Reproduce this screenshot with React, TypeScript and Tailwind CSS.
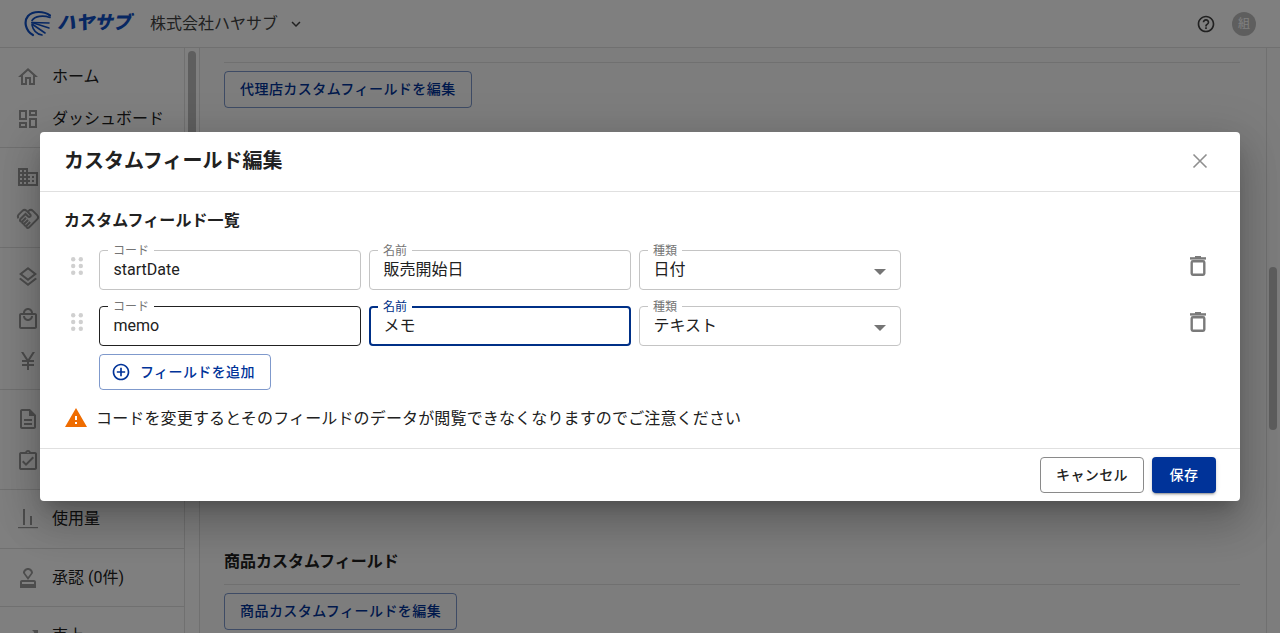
import {
  MdOutlineHome,
  MdOutlineDashboard,
  MdOutlineDomain,
  MdOutlineHandshake,
  MdOutlineLayers,
  MdOutlineLocalMall,
  MdCurrencyYen,
  MdOutlineDescription,
  MdOutlineAssignmentTurnedIn,
  MdOutlineApproval,
  MdOutlineHelpOutline,
  MdKeyboardArrowDown,
  MdOutlineAddCircleOutline,
  MdOutlineTrendingUp,
  MdWarning,
} from 'react-icons/md'

const UsageIcon = () => (
  <svg width="24" height="24" viewBox="0 0 24 24" fill="#9a9a9a">
    <rect x="2" y="20" width="20" height="1.2" />
    <rect x="7" y="2" width="2" height="16" />
    <rect x="14" y="9" width="2" height="9" />
  </svg>
)

const Logo = () => (
  <div className="flex items-center gap-[6px] ml-6">
    <svg width="27" height="28" viewBox="0 0 27 28" fill="none" stroke="#0f4fc4" strokeLinecap="round">
      <path d="M26 5.5C20 1 9 0.5 4 6C-0.5 11.5 1.5 21 9 25" strokeWidth="2.2" />
      <path d="M26 7.5C19 5 11 6 8 10.5" strokeWidth="1.6" />
      <path d="M8 12.5L25 18" strokeWidth="1.6" />
      <path d="M8 14L21 23" strokeWidth="1.6" />
      <path d="M8 12.5L25 13" strokeWidth="1.6" />
      <path d="M8 15C9 20 13 24 18 25" strokeWidth="1.6" />
    </svg>
    <span className="text-[18.5px] leading-none font-black italic text-[#0f4fc4]">ハヤサブ</span>
  </div>
)

const sections = [
  [
    { icon: <MdOutlineHome size={24} />, label: 'ホーム' },
    { icon: <MdOutlineDashboard size={24} />, label: 'ダッシュボード' },
  ],
  [
    { icon: <MdOutlineDomain size={24} /> },
    { icon: <MdOutlineHandshake size={24} /> },
  ],
  [
    { icon: <MdOutlineLayers size={24} /> },
    { icon: <MdOutlineLocalMall size={24} /> },
    { icon: <MdCurrencyYen size={24} /> },
  ],
  [
    { icon: <MdOutlineDescription size={24} /> },
    { icon: <MdOutlineAssignmentTurnedIn size={24} /> },
  ],
  [{ icon: <UsageIcon />, label: '使用量' }],
  [{ icon: <MdOutlineApproval size={24} />, label: '承認 (0件)' }],
]

const Sidebar = () => (
  <div className="flex w-[200px] shrink-0 border-r border-[#e0e0e0] bg-white">
    <nav className="w-[185px] shrink-0 border-r border-[#e0e0e0] overflow-hidden">
      {sections.map((items, i) => (
        <div key={i} className="border-b border-[#e0e0e0] pt-2 pb-[7px] [&:nth-child(5)]:pb-2">
          {items.map((item, j) => (
            <div key={j} className="flex items-center h-[42px] pl-4 gap-3 text-[16px] text-[#212121]">
              <span className="text-[#9a9a9a]">{item.icon}</span>
              <span>{item.label}</span>
            </div>
          ))}
        </div>
      ))}
      <div className="flex items-center h-[42px] mt-2 pl-4 gap-3 text-[16px] text-[#212121]">
        <MdOutlineTrendingUp size={24} className="text-[#9a9a9a]" />
        <span>売上</span>
      </div>
    </nav>
    <div className="flex-1 pl-[3px] pt-[3px]">
      <div className="w-2 h-[300px] rounded bg-[#bdbdbd]" />
    </div>
  </div>
)

const OutlineButton = ({ children }: { children: string }) => (
  <button className="h-[37px] px-[15px] rounded border border-[#00339980] text-[14px] tracking-[0.45px] font-medium text-[#003399]">
    {children}
  </button>
)

const Main = () => (
  <main className="flex-1 flex min-w-0 bg-[#fafafa]">
    <div className="flex-1 pl-6 pr-[26px] pt-[14px]">
      <div className="border-t border-[#e0e0e0]" />
      <div className="mt-2">
        <OutlineButton>代理店カスタムフィールドを編集</OutlineButton>
      </div>
      <h3 className="mt-[442px] h-6 leading-6 text-[16px] font-bold text-[#212121]">商品カスタムフィールド</h3>
      <div className="mt-[10px] border-t border-[#e0e0e0]" />
      <div className="mt-2">
        <OutlineButton>商品カスタムフィールドを編集</OutlineButton>
      </div>
    </div>
    <div className="w-[14px] shrink-0 border-l border-[#e0e0e0] pl-[2px] pt-[219px]">
      <div className="w-2 h-[163px] rounded bg-[#bdbdbd]" />
    </div>
  </main>
)

const DragHandle = () => (
  <div className="w-[35px] shrink-0 h-10 flex items-start pl-[7px] pt-[7px]">
    <svg width="12" height="18" viewBox="0 0 12 18" fill="#d0d0d0">
      <circle cx="2.2" cy="2.2" r="2.2" />
      <circle cx="9.8" cy="2.2" r="2.2" />
      <circle cx="2.2" cy="9" r="2.2" />
      <circle cx="9.8" cy="9" r="2.2" />
      <circle cx="2.2" cy="15.8" r="2.2" />
      <circle cx="9.8" cy="15.8" r="2.2" />
    </svg>
  </div>
)

const TrashIcon = () => (
  <svg width="24" height="24" viewBox="0 0 24 24" fill="#7a7a7a">
    <rect x="9" y="2" width="6" height="2" />
    <rect x="4" y="3.2" width="16" height="2.4" />
    <rect x="5.7" y="7.2" width="12.6" height="13.6" rx="1.2" fill="none" stroke="#7a7a7a" strokeWidth="2.4" />
  </svg>
)

const Field = ({
  label,
  value,
  state,
  select,
}: {
  label: string
  value: string
  state?: 'hover' | 'focus'
  select?: boolean
}) => (
  <div
    className={
      state === 'focus'
        ? 'relative w-[262px] h-10 rounded border-2 border-[#003087] pl-[12.5px] flex items-center text-[16px] text-[#212121]'
        : state === 'hover'
          ? 'relative w-[262px] h-10 rounded border border-[#212121] pl-[13.5px] flex items-center text-[16px] text-[#212121]'
          : 'relative w-[262px] h-10 rounded border border-[#c4c4c4] pl-[13.5px] flex items-center text-[16px] text-[#212121]'
    }
  >
    <span
      className={
        state === 'focus'
          ? 'absolute left-[7px] -top-[9px] px-[5px] bg-white text-[12px] leading-4 text-[#003087]'
          : 'absolute left-[8px] -top-[8px] px-[5px] bg-white text-[12px] leading-4 text-[#757575]'
      }
    >
      {label}
    </span>
    <span>{value}</span>
    {select && (
      <svg className="absolute right-[14px] top-[18px]" width="12" height="6" viewBox="0 0 12 6" fill="#757575">
        <path d="M0 0h12L6 6z" />
      </svg>
    )}
  </div>
)

const FieldRow = ({ code, name, type, active }: { code: string; name: string; type: string; active?: boolean }) => (
  <div className="flex items-start">
    <DragHandle />
    <div className="flex gap-2">
      <Field label="コード" value={code} state={active ? 'hover' : undefined} />
      <Field label="名前" value={name} state={active ? 'focus' : undefined} />
      <Field label="種類" value={type} select />
    </div>
    <button className="ml-auto w-9 h-8 flex items-center justify-center">
      <TrashIcon />
    </button>
  </div>
)

const Modal = () => (
  <div className="absolute inset-0 bg-black/50 flex items-center justify-center">
    <div className="w-[1200px] rounded bg-white shadow-[0_11px_15px_-7px_rgba(0,0,0,0.2),0_24px_38px_3px_rgba(0,0,0,0.14),0_9px_46px_8px_rgba(0,0,0,0.12)]">
      <div className="h-[60px] flex items-center justify-between pl-6 pr-[32px] pb-[2px] border-b border-[#e0e0e0]">
        <h2 className="text-[20px] font-bold text-[#212121]">カスタムフィールド編集</h2>
        <svg width="16" height="16" viewBox="0 0 16 16" stroke="#8f8f8f" strokeWidth="1.6" fill="none">
          <path d="M1.5 1.5L14.5 14.5M14.5 1.5L1.5 14.5" />
        </svg>
      </div>
      <div className="px-6 pt-[17px] pb-[18px]">
        <p className="h-6 leading-6 text-[16px] tracking-[0.1px] font-bold text-[#212121]">カスタムフィールド一覧</p>
        <div className="mt-[17px] flex flex-col gap-4">
          <FieldRow code="startDate" name="販売開始日" type="日付" />
          <FieldRow code="memo" name="メモ" type="テキスト" active />
        </div>
        <button className="mt-2 ml-[35px] h-9 w-[172px] flex items-center gap-[9px] pl-[11px] rounded border border-[#00339980] text-[14px] tracking-[0.4px] font-medium text-[#003399]">
          <MdOutlineAddCircleOutline size={20} />
          フィールドを追加
        </button>
        <div className="mt-4 h-6 flex items-center gap-2 text-[16px] tracking-[0.15px] text-[#212121]">
          <MdWarning size={24} className="text-[#ef6c00]" />
          <span className="pt-[2px]">コードを変更するとそのフィールドのデータが閲覧できなくなりますのでご注意ください</span>
        </div>
      </div>
      <div className="h-[53px] border-t border-[#e0e0e0] flex items-center justify-end gap-2 px-6">
        <button className="h-9 w-[104px] rounded border border-[#8a8a8a] text-[14px] tracking-[0.4px] font-medium text-[#212121]">
          キャンセル
        </button>
        <button className="h-9 w-16 rounded bg-[#003399] text-[14px] tracking-[0.4px] font-medium text-white shadow-[0_3px_1px_-2px_rgba(0,0,0,0.2),0_2px_2px_0_rgba(0,0,0,0.14),0_1px_5px_0_rgba(0,0,0,0.12)]">
          保存
        </button>
      </div>
    </div>
  </div>
)

export default function App() {
  return (
    <div className="relative h-[633px] overflow-hidden flex flex-col font-['Roboto','Noto_Sans_CJK_JP',sans-serif]">
      <header className="h-12 shrink-0 flex items-center bg-white border-b border-[#e0e0e0]">
        <Logo />
        <span className="ml-[19px] text-[16px] text-[#424242]">株式会社ハヤサブ</span>
        <MdKeyboardArrowDown size={18} className="ml-[9px] text-[#424242]" />
        <MdOutlineHelpOutline size={20} className="ml-auto text-[#424242]" />
        <div className="ml-4 mr-6 w-6 h-6 rounded-full bg-[#bdbdbd] flex items-center justify-center text-[12px] text-white">
          組
        </div>
      </header>
      <div className="flex-1 flex min-h-0">
        <Sidebar />
        <Main />
      </div>
      <Modal />
    </div>
  )
}
